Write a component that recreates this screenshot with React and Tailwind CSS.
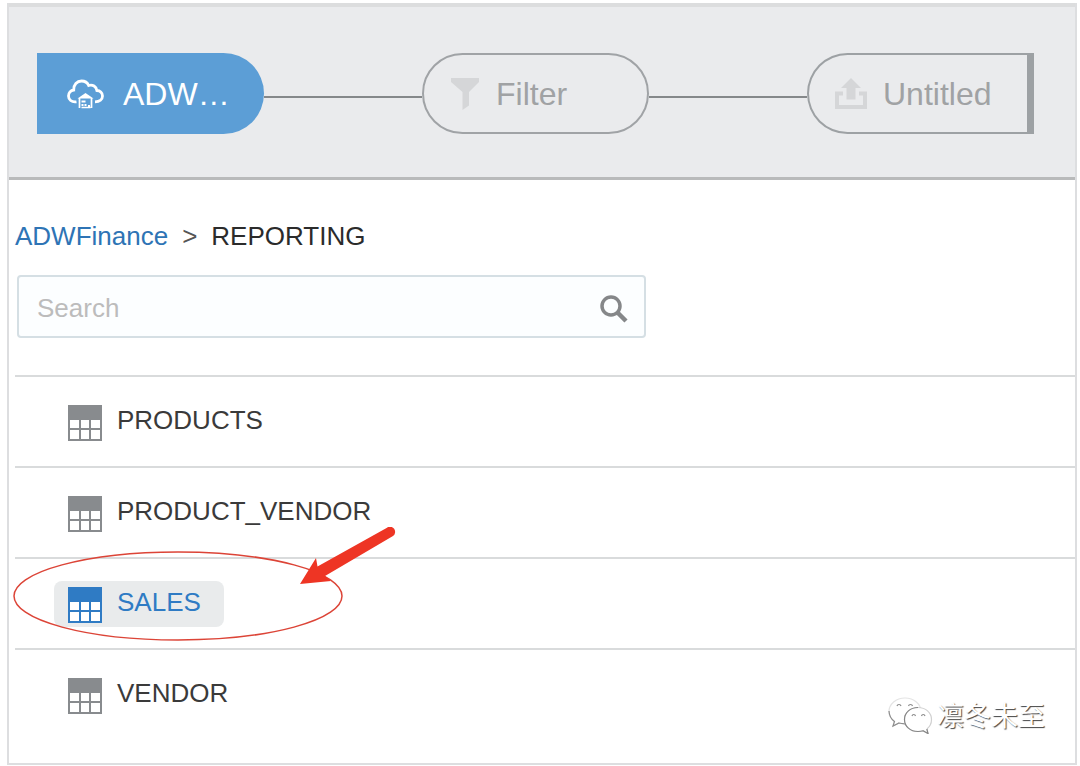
import { useState } from 'react';

const tables = ['PRODUCTS', 'PRODUCT_VENDOR', 'SALES', 'VENDOR'];

function CloudIcon() {
    return (
        <svg viewBox="0 0 38 30" className="h-[30px] w-[38px] shrink-0" fill="none" aria-hidden="true">
            <path
                d="M10.500 22.800C5.500 23.500 2.500 20.500 2.500 17c0-3.200 2.200-5.600 5.200-6C7.500 5.500 11 2 15.500 2c3.500 0 6 1.700 7.200 4.500 4-1.200 7.600 1 8.200 5 3 .2 5.600 2.300 5.600 5.500 0 3.400-2.800 5.800-7.500 5.800"
                stroke="currentColor"
                strokeWidth="2.8"
            />
            <path d="M11.500 19.500 19.500 14l8 5.500z" fill="currentColor" />
            <path d="M13.500 19v10M25.500 19v10M15.500 28.500h9" stroke="currentColor" strokeWidth="1.700" />
            <path d="M15.500 21.500h4v2h-4zM15.500 25h2v2h-2zM18.500 25h2v2h-2zM22 26h2v2h-2z" fill="currentColor" />
        </svg>
    );
}

function FilterIcon() {
    return (
        <svg viewBox="0 0 30 32" className="h-8 w-[30px] shrink-0" fill="currentColor" aria-hidden="true">
            <path d="M1 0h28v4L19 14v13.500L12.500 32V14L1 4z" />
        </svg>
    );
}

function ExportIcon() {
    return (
        <svg viewBox="0 0 32 32" className="size-8 shrink-0" fill="currentColor" aria-hidden="true">
            <path d="M16 0l10 10h-5.500v11.500h-9V10H6z" />
            <path d="M0 13.500h8v4H4V27h24v-9.500h-4v-4h8V31H0z" />
        </svg>
    );
}

function TableIcon() {
    return (
        <svg viewBox="0 0 34 36" className="h-9 w-[34px] shrink-0" aria-hidden="true">
            <path d="M0 0h34v36H0z" fill="currentColor" />
            <path
                d="M2 15h9v8H2zM13 15h8v8h-8zM23 15h9v8h-9zM2 25h9v9H2zM13 25h8v9h-8zM23 25h9v9h-9z"
                fill="#fff"
            />
        </svg>
    );
}

function SearchIcon() {
    return (
        <svg viewBox="0 0 28 28" className="size-7" fill="none" stroke="currentColor" aria-hidden="true">
            <circle cx="11" cy="11" r="9" strokeWidth="3.500" />
            <path d="M17.500 17.500l8.500 8.500" strokeWidth="4.500" />
        </svg>
    );
}

function WechatIcon() {
    return (
        <svg viewBox="0 0 46 38" className="h-[38px] w-[46px]" fill="#fff" strokeWidth="1.200" aria-hidden="true">
            <path d="M18 2C9 2 2 8 2 15.500c0 4 2 7.500 5.500 10L6 30l6-3c2 .6 4 .9 6 .9C27 28 34 23 34 15.500 34 8 27 2 18 2z" stroke="#e4e4e4" />
            <path d="M2 15c.2 4.500 2 8 5.500 10.500L6 30l6-3c2 .6 4 .8 6 .8" stroke="#8c8c8c" />
            <path d="M31 11.500c-7.500 0-13.500 5-13.500 12S23.500 35.500 31 35.500c1.800 0 3.500-.3 5-.8l5 2.800-1.200-4.500c3-2.200 4.700-5.700 4.700-9.500 0-7-6-12-13.500-12z" stroke="#d0d0d0" />
            <path d="M31 11.500c-7.500 0-13.500 5-13.500 12S23.500 35.500 31 35.500c1.800 0 3.500-.3 5-.8l5 2.800-1.200-4.500" stroke="#858585" />
            <path d="M10 10c.5-2 3.500-2 4 0M21.500 10c.5-2 3.500-2 4 0M25 20c.5-2 3-2 3.500 0M34.500 20c.5-2 3-2 3.500 0" stroke="#8c8c8c" />
        </svg>
    );
}

// Hand-drawn marker around the table to pick
function Callout() {
    return (
        <svg
            viewBox="0 0 390 118"
            className="pointer-events-none absolute -top-8 -left-1 h-[118px] w-[390px]"
            fill="none"
            aria-hidden="true"
        >
            <ellipse cx="167" cy="69" rx="164" ry="44" stroke="#dc4437" strokeWidth="1.500" />
            <path d="M289 57l16-26 1.500 8.500L376 .7a5 5 0 0 1 6 8.300L314 49l6 5z" fill="#ee3524" />
        </svg>
    );
}

export default function App() {
    const [selected, setSelected] = useState('SALES');
    const [query, setQuery] = useState('');

    return (
        <div className="bg-white pt-[3px] pr-[3px] pb-[2px] pl-[7px] font-['Liberation_Sans',Arial,sans-serif]">
            <div className="border-x-2 border-b-2 border-[#dddee0]">
                <header className="flex items-center border-t-4 border-b-3 border-t-[#dcddde] border-b-[#b9babb] bg-[#eaebed] pt-[46px] pr-[41px] pb-[43px] pl-7 text-[32px]">
                    <button type="button" className="flex h-[81px] w-[227px] items-center gap-[19px] rounded-r-full bg-[#5c9ed6] pl-[29px] text-white">
                        <CloudIcon />
                        ADW…
                    </button>
                    <span className="mt-1.5 h-[2px] flex-1 bg-[#85888a]" />
                    <button type="button" className="flex h-[81px] w-[227px] items-center gap-4 rounded-full border-2 border-[#a0a3a6] pl-[26px] text-[#a0a2a4]">
                        <span className="text-[#d5d6d8]">
                            <FilterIcon />
                        </span>
                        Filter
                    </button>
                    <span className="mt-1.5 h-[2px] flex-1 bg-[#85888a]" />
                    <button type="button" className="flex h-[81px] w-[227px] items-center gap-4 rounded-l-full border-2 border-r-[7px] border-[#9da1a4] pl-[26px] text-[#a0a2a4]">
                        <span className="text-[#d5d6d8]">
                            <ExportIcon />
                        </span>
                        Untitled
                    </button>
                </header>

                <main className="pl-1.5">
                    <nav className="flex gap-3.5 pt-10 text-[26px] leading-8">
                        <a href="#adwfinance" className="text-[#2e74b5]">ADWFinance</a>
                        <span className="text-[#555]">&gt;</span>
                        <span className="text-[#2b2b2b]">REPORTING</span>
                    </nav>

                    <div className="mt-[23px] ml-[2px] flex h-[63px] w-[629px] max-w-full items-center rounded border-2 border-[#d5dfe4] bg-[#fcfeff] pt-1 pr-4 pl-[18px]">
                        <input
                            type="text"
                            aria-label="Search"
                            placeholder="Search"
                            value={query}
                            onChange={(e) => setQuery(e.target.value)}
                            className="min-w-0 flex-1 text-[26px] text-[#333] outline-none placeholder:text-[#bcbcbc]"
                        />
                        <button type="button" aria-label="Run search" className="text-[#858789]">
                            <SearchIcon />
                        </button>
                    </div>

                    <ul className="mt-[37px]">
                        {tables.map((name) => (
                            <li key={name} className="relative h-[91px] border-t-2 border-[#d9dbdc] pt-[22px] pl-[39px]">
                                <button
                                    type="button"
                                    onClick={() => setSelected(name)}
                                    className={
                                        name === selected
                                            ? 'flex h-[46px] items-center gap-[15px] rounded-lg bg-[#e9ebec] pr-[23px] pl-3.5 text-[26px] text-[#2f7bc4]'
                                            : 'flex h-[46px] items-center gap-[15px] rounded-lg pr-[23px] pl-3.5 text-[26px] text-[#3a3a3a]'
                                    }
                                >
                                    <span className={name === selected ? 'pt-0.5' : 'pt-0.5 text-[#888b8e]'}>
                                        <TableIcon />
                                    </span>
                                    <span className="pb-1">{name}</span>
                                </button>
                                {name === 'SALES' && <Callout />}
                            </li>
                        ))}
                    </ul>
                </main>

                <footer className="-mt-[43px] flex h-[67px] justify-end pr-[30px]">
                    <div className="flex h-[38px] items-center gap-1">
                        <WechatIcon />
                        <span className="font-['Noto_Sans_CJK_SC',sans-serif] text-[27px] text-white [text-shadow:1px_1px_1px_#444]">凛冬未至</span>
                    </div>
                </footer>
            </div>
        </div>
    );
}
